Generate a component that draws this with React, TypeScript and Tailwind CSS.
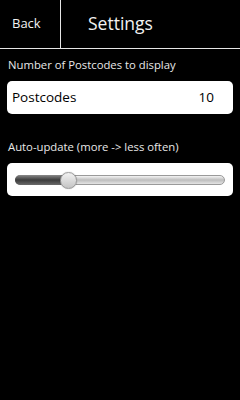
import { useState } from 'react';

const App = () => {
    const [value, setValue] = useState(25);

    return (
        <div className="w-[240px] h-[400px] bg-black text-white font-['Open_Sans',sans-serif]">
            {/* title bar */}
            <div className="flex h-[49px] border-b border-[#e6e6e6]">
                <button className="w-[61px] border-r border-[#e6e6e6] text-left pl-3 text-[13px] text-[#f2f2f2]">
                    Back
                </button>
                <div className="flex-1 pl-[27px] flex items-center text-[17.5px] text-[#f2f2f2] pb-[2px]">
                    Settings
                </div>
            </div>

            <div className="px-[7px]">
                <div className="pt-[7px] pl-[1px] text-[11.3px] leading-[17px] text-[#e8e8e8]">
                    Number of Postcodes to display
                </div>
                <div className="mt-[8px] h-[33px] bg-white rounded-[5px] flex items-center justify-between pl-[5px] pr-[19px] text-black text-[13.5px]">
                    <span>Postcodes</span>
                    <span>10</span>
                </div>

                <div className="pt-[24px] pl-[1px] text-[11.3px] leading-[17px] text-[#e8e8e8]">
                    Auto-update (more -&gt; less often)
                </div>
                <div className="mt-[8px] h-[33px] bg-white rounded-[5px] flex items-center px-[8px]">
                    <div className="relative flex-1 h-[10px] mt-[1px]">
                        <div className="absolute inset-0 rounded-full border border-[#9a9a9a] bg-gradient-to-b from-[#f4f4f4] via-[#bdbdbd] to-[#e4e4e4]" />
                        <div
                            className="absolute left-0 top-0 bottom-0 rounded-full bg-gradient-to-b from-[#8a8a8a] via-[#3c3c3c] to-[#6a6a6a]"
                            style={{ width: `${value}%` }}
                        />
                        <div
                            className="absolute top-1/2 w-[17px] h-[17px] -ml-[8px] -mt-[8.5px] rounded-full border border-[#9c9c9c] bg-gradient-to-b from-[#f2f2f2] to-[#c4c4c4] shadow-[0_0_1px_rgba(0,0,0,0.4)]"
                            style={{ left: `${value}%` }}
                            onClick={() => setValue(value)}
                        />
                    </div>
                </div>
            </div>
        </div>
    );
};

export default App;
